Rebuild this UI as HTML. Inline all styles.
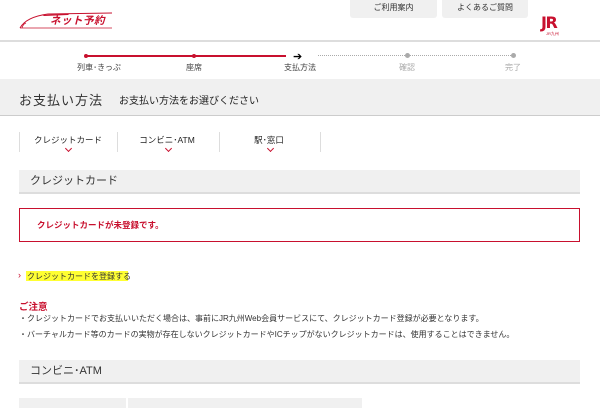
<!DOCTYPE html>
<html><head><meta charset="utf-8"><style>
*{margin:0;padding:0;box-sizing:border-box}
body{width:600px;height:406px;overflow:hidden;background:#fff;font-family:"Liberation Sans","Noto Sans CJK JP",sans-serif;color:#333;position:relative}
.a{position:absolute}
.btn{background:#f0f0f0;border-radius:0 0 3px 3px;height:18px;font-size:8px;text-align:center;line-height:16px;color:#333}
.lbl{font-size:8px;color:#444;transform:translateX(-50%);white-space:nowrap}
.tab{font-size:8.5px;color:#222;text-align:center;width:98px}
.chev{width:5px;height:5px;border-right:1.3px solid #c8102e;border-bottom:1.3px solid #c8102e;transform:rotate(45deg)}
.div{width:1px;height:20px;background:#ddd}
.hd{left:19px;width:561px;height:24px;background:#f0f0f0;border-bottom:2px solid #ddd;font-size:11px;line-height:22px;padding-left:11px;color:#333}
.sm{font-size:8px;color:#333}
</style></head><body>
<svg class="a" style="left:18px;top:10px" width="96" height="22" viewBox="0 0 96 22">
<path d="M2 18 Q8 7 30 4 L94 3" fill="none" stroke="#c8102e" stroke-width="1"/>
<path d="M24 5 L52 3.5 L50 5 L26 6 Z" fill="#c8102e"/>
<path d="M2 18 L94 18" stroke="#c8102e" stroke-width="0.8"/>
<path d="M4 18 Q5 14 8 13" fill="none" stroke="#c8102e" stroke-width="0.8"/>
</svg>
<div class="a" style="left:50px;top:13px;font-size:10.5px;font-weight:bold;font-style:italic;color:#c8102e;letter-spacing:0.5px">ネット予約</div>
<div class="a btn" style="left:350px;top:0;width:87px">ご利用案内</div>
<div class="a btn" style="left:442px;top:0;width:86px">よくあるご質問</div>
<div class="a" style="left:541px;top:13px;font-size:16px;font-weight:900;color:#c8102e;letter-spacing:-1.5px;font-family:'DejaVu Sans',sans-serif">JR</div>
<div class="a" style="left:546px;top:31px;font-size:4px;color:#c8102e">JR九州</div>
<div class="a" style="left:0;top:40px;width:600px;height:2px;background:#ddd"></div>
<div class="a" style="left:86px;top:55px;width:200px;height:2px;background:#c8102e"></div>
<div class="a" style="left:84px;top:54px;width:4px;height:4px;border-radius:50%;background:#c8102e"></div>
<div class="a" style="left:192px;top:54px;width:4px;height:4px;border-radius:50%;background:#c8102e"></div>
<div class="a" style="left:293px;top:50px;font-size:11px;color:#000">➔</div>
<div class="a" style="left:318px;top:55px;width:195px;border-top:1.5px dotted #aaa"></div>
<div class="a" style="left:405px;top:53px;width:5px;height:5px;border-radius:50%;background:#aaa"></div>
<div class="a" style="left:511px;top:53px;width:5px;height:5px;border-radius:50%;background:#aaa"></div>
<div class="a lbl" style="left:99px;top:62px">列車･きっぷ</div>
<div class="a lbl" style="left:194px;top:62px">座席</div>
<div class="a lbl" style="left:300px;top:62px">支払方法</div>
<div class="a lbl" style="left:407px;top:62px;color:#aaa">確認</div>
<div class="a lbl" style="left:513px;top:62px;color:#aaa">完了</div>
<div class="a" style="left:0;top:79px;width:600px;height:37px;background:#f0f0f0;border-bottom:1px solid #ccc"></div>
<div class="a" style="left:19px;top:90px;font-size:13px;color:#333;letter-spacing:1px">お支払い方法</div>
<div class="a" style="left:119px;top:92px;font-size:10px;color:#222">お支払い方法をお選びください</div>
<div class="a div" style="left:19px;top:132px"></div>
<div class="a div" style="left:117px;top:132px"></div>
<div class="a div" style="left:219px;top:132px"></div>
<div class="a div" style="left:320px;top:132px"></div>
<div class="a tab" style="left:19px;top:134px">クレジットカード</div>
<div class="a tab" style="left:118px;top:134px">コンビニ･ATM</div>
<div class="a tab" style="left:220px;top:134px">駅･窓口</div>
<div class="a chev" style="left:66px;top:146px"></div>
<div class="a chev" style="left:166px;top:146px"></div>
<div class="a chev" style="left:268px;top:146px"></div>
<div class="a hd" style="top:170px">クレジットカード</div>
<div class="a" style="left:19px;top:208px;width:561px;height:34px;border:1.5px solid #c8102e"></div>
<div class="a" style="left:37px;top:219px;font-size:8.5px;font-weight:bold;color:#c8102e">クレジットカードが未登録です。</div>
<div class="a" style="left:18px;top:270px;font-size:9px;color:#c8102e">›</div>
<div class="a" style="left:26px;top:271px;width:102px;height:10px;background:#ffff33"></div>
<div class="a sm" style="left:27px;top:271px">クレジットカードを登録する</div>
<div class="a" style="left:19px;top:299px;font-size:9.5px;font-weight:bold;color:#c8102e">ご注意</div>
<div class="a sm" style="left:19px;top:313px">・クレジットカードでお支払いいただく場合は、事前にJR九州Web会員サービスにて、クレジットカード登録が必要となります。</div>
<div class="a sm" style="left:19px;top:329px">・バーチャルカード等のカードの実物が存在しないクレジットカードやICチップがないクレジットカードは、使用することはできません。</div>
<div class="a hd" style="top:360px">コンビニ･ATM</div>
<div class="a" style="left:19px;top:398px;width:107px;height:10px;background:#f0f0f0"></div>
<div class="a" style="left:128px;top:398px;width:234px;height:10px;background:#f0f0f0"></div>
</body></html>
